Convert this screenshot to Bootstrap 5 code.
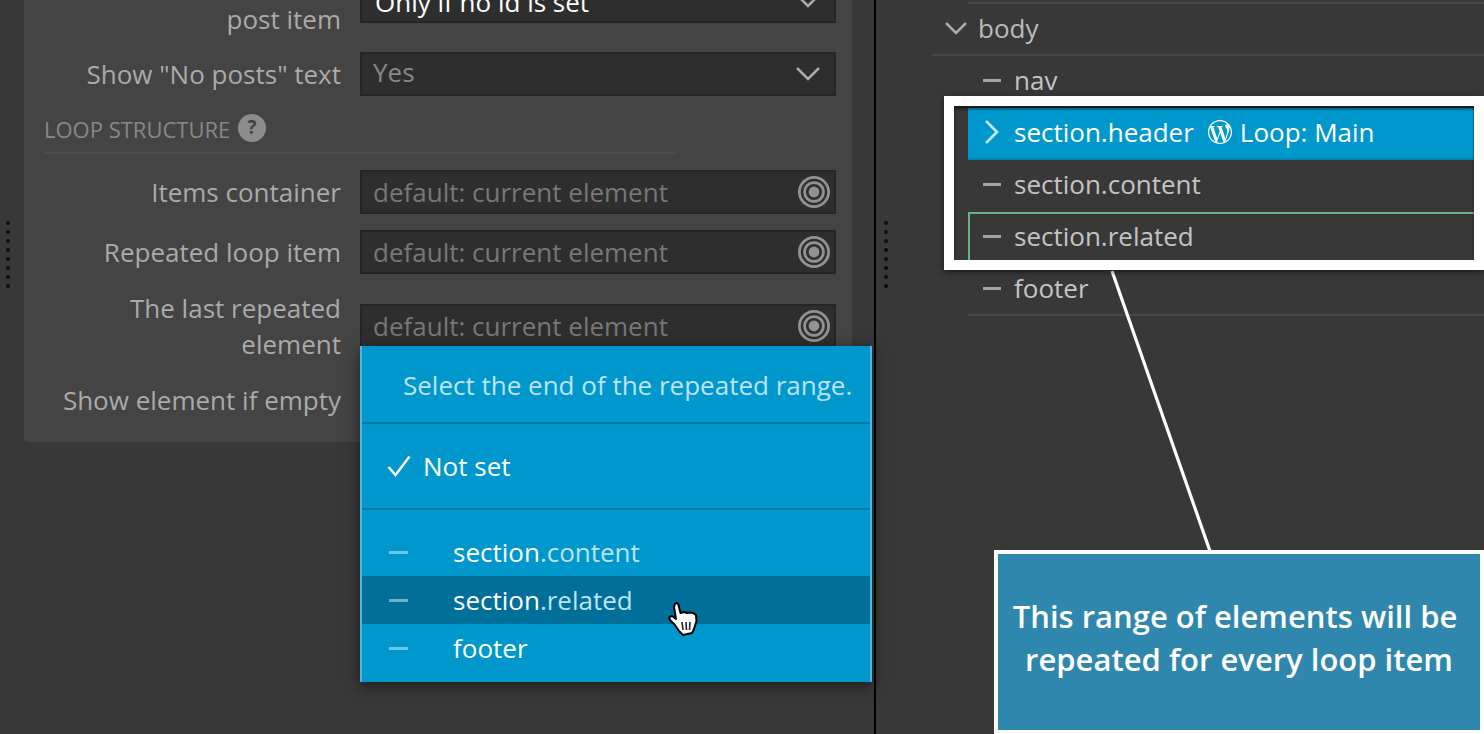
<!doctype html>
<html lang="en">
<head>
<meta charset="utf-8">
<title>Loop structure</title>
<link href="https://cdn.jsdelivr.net/npm/bootstrap@5.3.0/dist/css/bootstrap.min.css" rel="stylesheet">
<style>
html,body{height:734px;overflow:hidden;background:#383838;}
body{font-family:"Open Sans","Noto Sans",sans-serif;font-size:26px;line-height:36px;color:#aaa;}
.stage{width:1484px;height:734px;overflow:hidden;}
.leftpane{width:876px;flex:none;border-right:2px solid #000;padding-left:24px;position:relative;background:#383838;}
.rightpane{flex:1;position:relative;background:#383838;}
.panelcard{width:828px;height:442px;background:#444;border-radius:0 0 4px 4px;padding:0 16px 0 0;display:flex;flex-direction:column;}
.frow{display:flex;align-items:center;margin-bottom:16px;flex:none;min-height:44px;}
.frow.first{margin-top:-35px;margin-bottom:15px;}
.flabel{width:317px;flex:none;text-align:right;color:#aaa;white-space:nowrap;}
.fslot{margin-left:19px;width:476px;flex:none;}
.fbox{height:44px;background:#2e2e2e;border:2px solid #252525;display:flex;align-items:center;padding:0 3px 0 11px;color:#888;}
.fbox.sel{padding-right:13px;}
.fbox.sel .grow{padding-bottom:4px;}
.fbox.on{color:#fff;padding-left:13px;}
.fbox.on .grow{padding-bottom:0;padding-top:2px;}
.fbox .form-control{background:transparent;border:0;padding:0;box-shadow:none;font:inherit;line-height:36px;color:#888;border-radius:0;}
.fbox .form-control::placeholder{color:#777;opacity:1;}
.fbox .grow{flex:1;}
.loophead{margin-left:20px;width:634px;height:42px;margin-bottom:16px;flex:none;border-bottom:2px solid #4b4b4b;font-size:22px;line-height:34px;color:#888;}
.helpdot{display:inline-flex;align-items:center;justify-content:center;width:28px;height:28px;border-radius:50%;background:#8c8c8c;color:#444;font-size:19px;font-weight:700;line-height:1;vertical-align:4px;margin-left:2px;}
.dots{position:absolute;width:4px;display:flex;flex-direction:column;gap:5px;}
.dots i{width:4px;height:4px;border-radius:50%;background:#0d0d0d;display:block;}
.dots.d1{left:6px;top:221px;}
.dots.d2{left:8px;top:221px;}
.popmenu{position:absolute;left:360px;top:346px;width:512px;height:336px;background:#0098cc;border-left:2px solid #4fb6dd;border-right:2px solid #4fb6dd;box-shadow:0 4px 14px rgba(0,0,0,.5);z-index:5;color:#fff;}
.pophint{height:78px;border-bottom:2px solid #0078a4;padding:21px 0 0 41px;color:#bde3f2;white-space:nowrap;}
.popset{height:86px;border-bottom:2px solid #0078a4;display:flex;align-items:center;padding-left:25px;gap:12px;}
.poplist{padding-top:18px;}
.popitem{height:48px;display:flex;align-items:center;padding-left:27px;}
.popitem.hov{background:#006f99;}
.popitem .dashm{width:19px;height:3px;background:rgba(255,255,255,.45);margin-right:45px;}
.popitem em{font-style:normal;color:#bde3f2;}
.handcur{position:absolute;left:306px;top:256px;z-index:6;}
.treewrap{margin-top:2px;margin-left:56px;}
.treerow{height:52px;display:flex;align-items:center;color:#c4c4c4;white-space:nowrap;padding-bottom:4px;}
.treerow.bodyrow{border-bottom:2px solid #474747;color:#bbb;padding-left:12px;padding-bottom:2px;gap:10px;position:relative;}
.treekids{margin-left:36px;}
.treetop{margin-left:36px;border-top:2px solid #474747;height:0;}
.treekids .treerow{padding-left:15px;}
.treekids .dasht{width:18px;height:3px;background:#a4a4a4;margin-right:13px;flex:none;}
.treerow.act{background:#0098cc;border-bottom:2px solid #0086b5;color:#fff;padding-bottom:2px;}
.treerow.act .chev{margin-right:14px;margin-left:1px;}
.treerow.act .wplogo{margin:0 8px 0 14px;}
.treerow.rel{border-top:2px solid #63b588;border-left:2px solid #63b588;padding-bottom:6px;}
.treekids .treerow.rel{padding-left:13px;}
.treerow.foot{border-bottom:2px solid #474747;padding-bottom:2px;}
.hiframe{position:absolute;left:68px;top:96px;width:540px;height:174px;border:10px solid #fff;box-shadow:0 2px 6px rgba(0,0,0,.55),inset 0 3px 3px rgba(0,0,0,.55);z-index:3;pointer-events:none;}
.pointer{position:absolute;left:225px;top:268px;z-index:2;}
.callout{position:absolute;left:118px;top:550px;width:490px;height:184px;background:#2f87ae;border:4px solid #fff;color:#fff;font-weight:600;font-size:31px;line-height:43px;text-align:center;padding-top:41px;z-index:4;}
.callout div{white-space:nowrap;}
.callout .lineone{margin-right:8px;}
</style>
</head>
<body>
<div class="stage d-flex">
  <div class="leftpane">
    <div class="panelcard">
      <div class="frow first">
        <div class="flabel">&nbsp;<br>post item</div>
        <div class="fslot"><div class="fbox sel on"><span class="grow">Only if no id is set</span>
          <svg width="26" height="16" viewBox="0 0 26 16" fill="none" stroke="#aaa" stroke-width="2.6"><path d="M2 2l11 11L24 2"/></svg></div></div>
      </div>
      <div class="frow">
        <div class="flabel">Show "No posts" text</div>
        <div class="fslot"><div class="fbox sel"><span class="grow">Yes</span>
          <svg width="26" height="16" viewBox="0 0 26 16" fill="none" stroke="#aaa" stroke-width="2.6"><path d="M2 2l11 11L24 2"/></svg></div></div>
      </div>
      <div class="loophead">LOOP STRUCTURE <span class="helpdot">?</span></div>
      <div class="frow">
        <div class="flabel">Items container</div>
        <div class="fslot"><div class="fbox"><input class="form-control grow" placeholder="default: current element">
          <svg width="34" height="34" viewBox="0 0 34 34" fill="none" stroke="#929292" stroke-width="2.8"><circle cx="17" cy="17" r="14.6"/><circle cx="17" cy="17" r="9.4"/><circle cx="17" cy="17" r="5.4" fill="#929292" stroke="none"/></svg></div></div>
      </div>
      <div class="frow">
        <div class="flabel">Repeated loop item</div>
        <div class="fslot"><div class="fbox"><input class="form-control grow" placeholder="default: current element">
          <svg width="34" height="34" viewBox="0 0 34 34" fill="none" stroke="#929292" stroke-width="2.8"><circle cx="17" cy="17" r="14.6"/><circle cx="17" cy="17" r="9.4"/><circle cx="17" cy="17" r="5.4" fill="#929292" stroke="none"/></svg></div></div>
      </div>
      <div class="frow">
        <div class="flabel">The last repeated<br>element</div>
        <div class="fslot"><div class="fbox"><input class="form-control grow" placeholder="default: current element">
          <svg width="34" height="34" viewBox="0 0 34 34" fill="none" stroke="#929292" stroke-width="2.8"><circle cx="17" cy="17" r="14.6"/><circle cx="17" cy="17" r="9.4"/><circle cx="17" cy="17" r="5.4" fill="#929292" stroke="none"/></svg></div></div>
      </div>
      <div class="frow">
        <div class="flabel">Show element if empty</div>
      </div>
    </div>
    <div class="dots d1"><i></i><i></i><i></i><i></i><i></i><i></i><i></i><i></i></div>
    <div class="popmenu">
      <div class="pophint">Select the end of the repeated range.</div>
      <div class="popset">
        <svg width="24" height="22" viewBox="0 0 24 22" fill="none" stroke="#fff" stroke-width="2.4"><path d="M1.5 12l7 8L22.5 1.5"/></svg>
        <span>Not set</span>
      </div>
      <div class="poplist">
        <div class="popitem"><span class="dashm"></span><span>section<em>.content</em></span></div>
        <div class="popitem hov"><span class="dashm"></span><span>section<em>.related</em></span></div>
        <div class="popitem"><span class="dashm"></span><span>footer</span></div>
      </div>
      <svg class="handcur" width="32" height="36" viewBox="0 0 32 36">
        <path d="M7 2C8.500.5 10 1 10.500 3L12.500 11 16 10 19 11 22 10.500 25 11 28 13 28.500 19 26 27 24 31 15 33 11 29 7 23 2 18C.5 16 2 14 4 14L8 17 6 5Z" fill="#fff" stroke="#000" stroke-width="2" stroke-linejoin="round"/>
        <path d="M14 20l1 8M18 20l.5 8M22 20l-.5 8" stroke="#222" stroke-width="1.600" fill="none"/>
      </svg>
    </div>
  </div>
  <div class="rightpane">
    <div class="dots d2"><i></i><i></i><i></i><i></i><i></i><i></i><i></i><i></i></div>
    <div class="treewrap">
      <div class="treetop"></div>
      <div class="treerow bodyrow">
        <svg width="24" height="16" viewBox="0 0 24 16" fill="none" stroke="#aaa" stroke-width="2.6"><path d="M2 3l10 10L22 3"/></svg>
        <span>body</span>
      </div>
      <div class="treekids">
        <div class="treerow"><span class="dasht"></span><span>nav</span></div>
        <div class="treerow act">
          <svg class="chev" width="16" height="26" viewBox="0 0 16 26" fill="none" stroke="#bfe6f5" stroke-width="2.8"><path d="M2 2l11 11L2 24"/></svg>
          <span>section.header</span>
          <svg class="wplogo" width="24" height="24" viewBox="0 0 24 24" fill="#fff"><path d="M21.469 6.825c.84 1.537 1.318 3.3 1.318 5.175 0 3.979-2.156 7.456-5.363 9.325l3.295-9.527c.615-1.54.82-2.771.82-3.864 0-.405-.026-.78-.07-1.11m-7.981.105c.647-.03 1.232-.105 1.232-.105.582-.075.514-.93-.067-.899 0 0-1.755.135-2.88.135-1.064 0-2.85-.15-2.85-.15-.585-.03-.661.855-.075.885 0 0 .54.061 1.125.09l1.68 4.605-2.37 7.08L5.354 6.9c.649-.03 1.234-.1 1.234-.1.585-.075.516-.93-.065-.896 0 0-1.746.138-2.874.138-.2 0-.438-.008-.69-.015C4.911 3.15 8.235 1.215 12 1.215c2.809 0 5.365 1.072 7.286 2.833-.046-.003-.091-.009-.141-.009-1.06 0-1.812.923-1.812 1.914 0 .89.513 1.643 1.06 2.531.411.72.89 1.643.89 2.977 0 .915-.354 1.994-.821 3.479l-1.075 3.585-3.9-11.61.001.014zM12 22.784c-1.059 0-2.081-.153-3.048-.437l3.237-9.406 3.315 9.087c.024.053.05.101.078.149-1.12.393-2.325.609-3.582.609M1.211 12c0-1.564.336-3.05.935-4.39L7.29 21.709C3.694 19.96 1.212 16.271 1.211 12M12 0C5.385 0 0 5.385 0 12s5.385 12 12 12 12-5.385 12-12S18.615 0 12 0"/></svg>
          <span>Loop: Main</span>
        </div>
        <div class="treerow"><span class="dasht"></span><span>section.content</span></div>
        <div class="treerow rel"><span class="dasht"></span><span>section.related</span></div>
        <div class="treerow foot"><span class="dasht"></span><span>footer</span></div>
      </div>
    </div>
    <div class="hiframe"></div>
    <svg class="pointer" width="120" height="290" viewBox="0 0 120 290" fill="none" stroke="#fff" stroke-width="3.200"><path d="M11 3l99 283"/></svg>
    <div class="callout"><div class="lineone">This range of elements will be</div><div>repeated for every loop item</div></div>
  </div>
</div>
<script src="https://cdn.jsdelivr.net/npm/bootstrap@5.3.0/dist/js/bootstrap.bundle.min.js"></script>
</body>
</html>
